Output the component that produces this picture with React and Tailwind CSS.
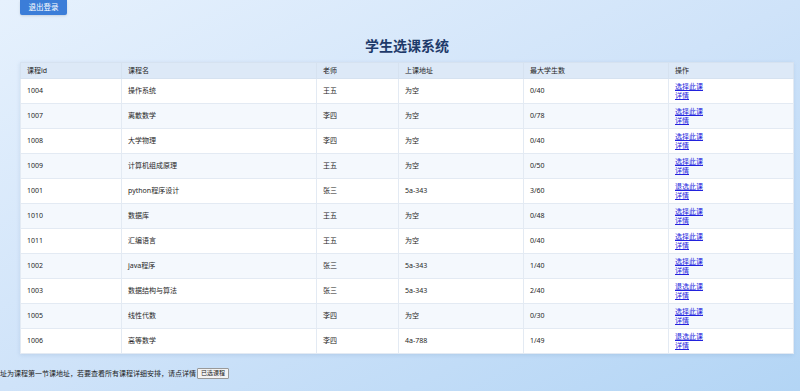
const COURSES = [
  { id: '1004', name: '操作系统', teacher: '王五', room: '为空', count: '0/40', picked: false },
  { id: '1007', name: '离散数学', teacher: '李四', room: '为空', count: '0/78', picked: false },
  { id: '1008', name: '大学物理', teacher: '李四', room: '为空', count: '0/40', picked: false },
  { id: '1009', name: '计算机组成原理', teacher: '王五', room: '为空', count: '0/50', picked: false },
  { id: '1001', name: 'python程序设计', teacher: '张三', room: '5a-343', count: '3/60', picked: true },
  { id: '1010', name: '数据库', teacher: '王五', room: '为空', count: '0/48', picked: false },
  { id: '1011', name: '汇编语言', teacher: '王五', room: '为空', count: '0/40', picked: false },
  { id: '1002', name: 'java程序', teacher: '张三', room: '5a-343', count: '1/40', picked: false },
  { id: '1003', name: '数据结构与算法', teacher: '张三', room: '5a-343', count: '2/40', picked: true },
  { id: '1005', name: '线性代数', teacher: '李四', room: '为空', count: '0/30', picked: false },
  { id: '1006', name: '高等数学', teacher: '李四', room: '4a-788', count: '1/49', picked: true },
]

const HEADERS = ['课程id', '课程名', '老师', '上课地址', '最大学生数', '操作']

const cell = 'px-[6px] border border-[#e3eaf3] text-[#262626]'

export default function App() {
  return (
    <div className="w-[800px] h-[391px] overflow-hidden bg-gradient-to-br from-[#e6f1fd] via-[#cfe3f9] to-[#b3d5f5] font-['Noto_Sans','Noto_Sans_CJK_SC',sans-serif] text-[#262626]">
      <button className="block ml-[20px] w-[47px] h-[15px] bg-[#3b7dd8] rounded-b-[2px] text-white text-[7.5px] leading-[15px] shadow-sm">
        退出登录
      </button>

      <h1 className="mt-[22px] text-center text-[14px] leading-[17px] font-bold text-[#1e3a6a] pl-[14px]">
        学生选课系统
      </h1>

      <div className="mt-[8px] ml-[20px] w-[773px] bg-white shadow-[0_1px_4px_rgba(60,100,150,0.15)]">
        <table className="w-full table-fixed border-collapse text-[7px]">
          <colgroup>
            <col className="w-[101px]" />
            <col className="w-[195px]" />
            <col className="w-[82px]" />
            <col className="w-[125px]" />
            <col className="w-[145px]" />
            <col className="w-[125px]" />
          </colgroup>
          <thead>
            <tr className="h-[15px] bg-[#dde9f7]">
              {HEADERS.map(h => (
                <th key={h} className="px-[6px] text-left font-normal text-[#262626] border border-[#d6e2f0] leading-[15px]">{h}</th>
              ))}
            </tr>
          </thead>
          <tbody>
            {COURSES.map((c, i) => (
              <tr key={c.id} className={i % 2 === 0 ? 'h-[25px] bg-white' : 'h-[25px] bg-[#f4f8fd]'}>
                <td className={cell}>{c.id}</td>
                <td className={cell}>{c.name}</td>
                <td className={cell}>{c.teacher}</td>
                <td className={cell}>{c.room}</td>
                <td className={cell}>{c.count}</td>
                <td className={cell + ' leading-[9.5px]'}>
                  <a href="#" className="block text-[#2222dd] underline w-fit">{c.picked ? '退选此课' : '选择此课'}</a>
                  <a href="#" className="block text-[#2222dd] underline w-fit">详情</a>
                </td>
              </tr>
            ))}
          </tbody>
        </table>
      </div>

      <div className="mt-[14px] flex items-center text-[7px] leading-[11px] text-[#222]">
        <span>址为课程第一节课地址，若要查看所有课程详细安排，请点详情</span>
        <button className="ml-[1px] h-[11px] px-[3px] border border-[#999] rounded-[1px] bg-[#f3f3f3] text-[6px] leading-[9px] text-[#222]">
          已选课程
        </button>
      </div>
    </div>
  )
}
